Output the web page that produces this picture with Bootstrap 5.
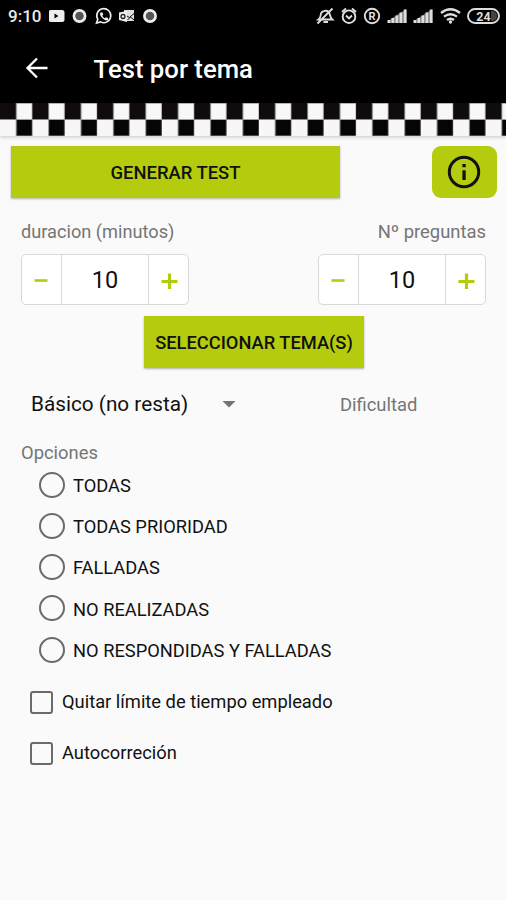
<!DOCTYPE html>
<html lang="es">
<head>
<meta charset="utf-8">
<meta name="viewport" content="width=device-width, initial-scale=1">
<title>Test por tema</title>
<link href="https://cdn.jsdelivr.net/npm/bootstrap@5.3.0/dist/css/bootstrap.min.css" rel="stylesheet">
<style>
  body { font-family: Roboto, "Noto Sans", sans-serif; background: #fafafa; color: #111; line-height: 1; min-height: 900px; overflow: hidden; }
  svg { display: block; flex: none; }
  .fit { white-space: nowrap; }
  .status { height: 34px; padding: 0 6px 2px 8px; }
  .clock { font-size: 17px; width: 41px; color: #e8e8e8; font-weight: 500; }
  .appbar { height: 69px; padding-left: 24px; }
  .appbar svg { margin-top: -1px; }
  .title { font-size: 25.7px; font-weight: 500; margin: 2px 0 0 43.500px; }
  .flag { height: 33px; box-shadow: 0 1px 4px rgba(0,0,0,.22); }
  .lime { --bs-btn-bg: #b5cc0e; --bs-btn-hover-bg: #a7bd0c; --bs-btn-color: #111; background: #b5cc0e; color: #111; font-size: 18.4px; font-weight: 500; height: 52px; padding: 2px 0 0; border: 0; line-height: 1; }
  .flat { box-shadow: 0 1px 2px rgba(0,0,0,.3); }
  .generate { width: 329px; }
  .about { width: 65px; border-radius: 9px; padding: 0 1px 0 0; }
  .actions { padding: 10px 9px 0 11px; }
  .fields { padding: 22px 20px 0 21px; }
  .hint { color: #757575; font-size: 18.4px; height: 24px; line-height: 24px; }
  .duration { font-size: 18.2px; }
  .stepper { width: 168px; height: 51px; margin-top: 10px; border: 1px solid #d8d8d8; border-radius: 5px; background: #fff; }
  .stepper button { width: 39px; padding: 0; border: 0; color: #b5cc0e; border-radius: 0; }
  .amount { border: solid #d8d8d8; border-width: 0 1px; font-size: 23.5px; padding-top: 2px; }
  .pick { width: 220px; margin: 11px 0 0 144px; font-size: 18.3px; }
  .mode { height: 72px; padding-left: 31px; }
  .mode-name { font-size: 20.75px; width: 191px; }
  .level { margin-left: 104px; padding-top: 1px; }
  .options-title { margin-left: 21px; height: 25px; line-height: 26px; }
  .choice { font-size: 18.3px; height: 41.25px; padding-left: 39px; }
  .choice span { padding-top: 3px; }
  .choices { margin-top: -1px; padding-bottom: 1px; }
  .choice .form-check-input, .toggle .form-check-input { margin: 0; border: 2.4px solid #6b6b6b; background: transparent; flex: none; }
  .choice .form-check-input { width: 26px; height: 26px; margin-right: 8px; }
  .toggle { font-size: 18.32px; height: 51.5px; padding-left: 30px; }
  .toggle .form-check-input { width: 23px; height: 23px; border-radius: 3px; margin-right: 9px; }
  .toggles { padding-top: 5px; }
</style>
</head>
<body>
<header class="bg-black text-white">
  <div class="status d-flex align-items-center justify-content-between">
    <div class="d-flex align-items-center">
      <span class="clock fit">9:10</span>
      <svg width="110" height="20" viewBox="49 6 110 20">
        <rect x="48.500" y="10" width="16" height="12" rx="2.500" fill="#eee"/><path d="M54.500 13.500v5l4-2.500z" fill="#000"/>
        <g fill="#555" stroke="#eee" stroke-width="2.700"><circle cx="79.500" cy="16" r="5.600"/><circle cx="150" cy="16" r="5.600"/></g>
        <path d="M96.500 23l1.300-3.700a7 7 0 1 1 2.800 2.600z" fill="none" stroke="#eee" stroke-width="1.600"/>
        <path d="M100.500 12.500c-1 1-.5 3.500 2 5.800s4.800 2.700 5.700 1.600l-.2-1.800-2-.8-1.200 1c-1.200-.6-2-1.500-2.500-2.500l1-1.200-.8-2z" fill="#eee"/>
        <path d="M124 10h10v11h-10z" fill="#ddd"/><path d="M126 15.500l3.500 2 4.500-4M127.500 20l3-3 3.500 3" stroke="#111" fill="none"/>
        <path d="M119 12.500l8-1.500v11l-8-2z" fill="#eee"/><circle cx="123" cy="16.500" r="2" fill="none" stroke="#222" stroke-width="1.300"/>
      </svg>
    </div>
    <svg width="184" height="22" viewBox="316 5 184 22">
      <g fill="none" stroke="#ddd" stroke-width="1.900">
        <path d="M318.500 19.500c2.500-2 2-4 2.500-6 .8-2.500 6.500-4.500 8.500 0 .8 2 .5 4 2.800 6zM323.500 22h4.500M317.500 23.500L332.500 8.500"/>
        <circle cx="349" cy="16.700" r="6.300"/><path d="M346 15.500l3 3 3-3M342 12l4-3.500M356 12l-4-3.500"/>
        <circle cx="372" cy="16" r="7.200"/>
        <path d="M441 13q9.500-7.500 19 0M444 16.700q6.500-5 13 0M447 20q3.500-2.600 7 0" stroke-width="2.300"/>
        <rect x="468" y="9" width="31" height="14" rx="7"/>
      </g>
      <circle cx="450.500" cy="22" r="1.700" fill="#ddd"/>
      <g id="bars"><path d="M390 23V19.500L406.500 9V23z" fill="#777"/><path d="M387.500 20h2.800v3h-2.800zM391.500 18h2.800v5h-2.800zM395.500 15.500h2.800V23h-2.800zM399.500 12.500h2.800V23h-2.800zM403.700 9.500h2.800V23h-2.800z" fill="#ddd"/></g>
      <use href="#bars" x="26"/>
      <path d="M491 11h2q4 1 4 5t-4 5h-2z" fill="#444"/>
      <g fill="#ddd" font-weight="700" text-anchor="middle"><text x="372" y="20" font-size="11">R</text><text x="483.500" y="20.500" font-size="12.500">24</text></g>
    </svg>
  </div>
  <div class="appbar d-flex align-items-center">
    <svg width="26" height="26" viewBox="0 0 26 26" fill="none" stroke="#fff" stroke-width="2.300"><path d="M23.500 13H4M13 3.500L3.500 13l9.500 9.500"/></svg>
    <h1 class="title fit">Test por tema</h1>
  </div>
</header>
<svg class="flag w-100" height="33">
  <defs><pattern id="squares" width="32.370" height="33" patternUnits="userSpaceOnUse">
    <rect width="33" height="33" fill="#8b8888"/>
    <rect width="15.800" height="16" fill="#100c0d"/><rect x="16.800" y=".6" width="15.200" height="15.600" fill="#f8f8f8"/>
    <rect y="17" width="15.800" height="16" fill="#f8f6f7"/><rect x="16.800" y="17" width="15.200" height="15.500" fill="#050505"/>
  </pattern></defs>
  <rect width="506" height="33" fill="url(#squares)"/>
</svg>
<main>
  <div class="actions d-flex justify-content-between">
    <button class="btn lime flat generate rounded-0">GENERAR TEST</button>
    <button class="btn lime about d-flex align-items-center justify-content-center" aria-label="Información">
      <svg width="34" height="34" viewBox="0 0 34 34"><circle cx="17" cy="17" r="14.700" fill="none" stroke="#111" stroke-width="3"/><path d="M15.400 9h3.300v3.300h-3.300zM15.400 15.300h3.300V25h-3.300z" fill="#111"/></svg>
    </button>
  </div>
  <div class="fields d-flex justify-content-between">
    <div>
      <div class="hint duration fit">duracion (minutos)</div>
      <div class="stepper d-flex">
        <button class="btn d-flex align-items-center justify-content-center" aria-label="Menos"><svg width="18" height="18"><path d="M1.500 9.500h13" stroke="#b5cc0e" stroke-width="2.600"/></svg></button>
        <div class="amount flex-fill d-flex align-items-center justify-content-center">10</div>
        <button class="btn d-flex align-items-center justify-content-center" aria-label="Más"><svg width="18" height="18"><path d="M1.500 10.500h16M9.500 2.500v16" stroke="#b5cc0e" stroke-width="3.200"/></svg></button>
      </div>
    </div>
    <div>
      <div class="hint fit text-end">Nº preguntas</div>
      <div class="stepper d-flex">
        <button class="btn d-flex align-items-center justify-content-center" aria-label="Menos"><svg width="18" height="18"><path d="M1.500 9.500h13" stroke="#b5cc0e" stroke-width="2.600"/></svg></button>
        <div class="amount flex-fill d-flex align-items-center justify-content-center">10</div>
        <button class="btn d-flex align-items-center justify-content-center" aria-label="Más"><svg width="18" height="18"><path d="M1.500 10.500h16M9.500 2.500v16" stroke="#b5cc0e" stroke-width="3.200"/></svg></button>
      </div>
    </div>
  </div>
  <button class="btn lime flat pick rounded-0 d-block">SELECCIONAR TEMA(S)</button>
  <div class="mode d-flex align-items-center">
    <span class="mode-name fit">Básico (no resta)</span>
    <svg width="14" height="8"><path d="M.5 1h13L7 7.500z" fill="#737373"/></svg>
    <span class="hint level fit">Dificultad</span>
  </div>
  <div class="hint options-title fit">Opciones</div>
  <div class="choices">
    <label class="choice d-flex align-items-center fit"><input class="form-check-input" type="radio" name="opcion"><span>TODAS</span></label>
    <label class="choice d-flex align-items-center fit"><input class="form-check-input" type="radio" name="opcion"><span>TODAS PRIORIDAD</span></label>
    <label class="choice d-flex align-items-center fit"><input class="form-check-input" type="radio" name="opcion"><span>FALLADAS</span></label>
    <label class="choice d-flex align-items-center fit"><input class="form-check-input" type="radio" name="opcion"><span>NO REALIZADAS</span></label>
    <label class="choice d-flex align-items-center fit"><input class="form-check-input" type="radio" name="opcion"><span>NO RESPONDIDAS Y FALLADAS</span></label>
  </div>
  <div class="toggles">
    <label class="toggle d-flex align-items-center fit"><input class="form-check-input" type="checkbox">Quitar límite de tiempo empleado</label>
    <label class="toggle d-flex align-items-center fit"><input class="form-check-input" type="checkbox">Autocorreción</label>
  </div>
</main>
<script src="https://cdn.jsdelivr.net/npm/bootstrap@5.3.0/dist/js/bootstrap.bundle.min.js"></script>
</body>
</html>
